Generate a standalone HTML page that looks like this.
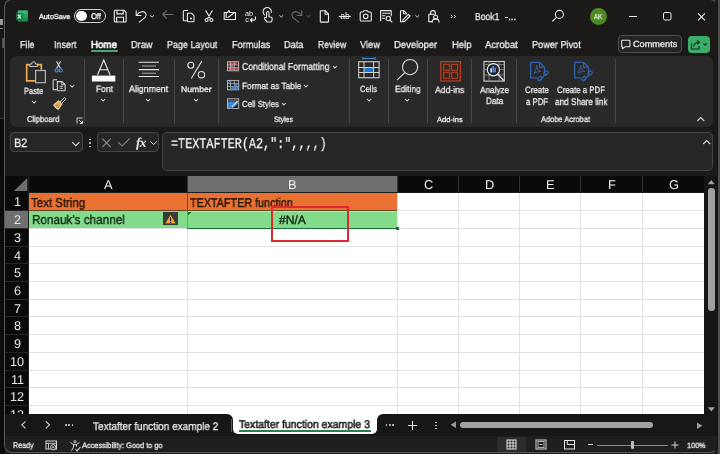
<!DOCTYPE html><html><head><meta charset="utf-8"><style>
*{margin:0;padding:0;box-sizing:border-box}
html,body{width:720px;height:454px;overflow:hidden;background:#101010;font-family:"Liberation Sans",sans-serif;color:#fff}
.a{position:absolute}
.t{position:absolute;white-space:nowrap;line-height:1;text-rendering:geometricPrecision;will-change:transform}
svg{position:absolute;overflow:visible}
</style></head><body>
<div class="a" style="left:0px;top:0px;width:720px;height:454px;background:#1c1c1c"></div>
<div class="a" style="left:0px;top:0px;width:5px;height:454px;background:#0c0c0c"></div>
<div class="a" style="left:0px;top:0px;width:4px;height:118px;background:#161616"></div>
<div class="a" style="left:0px;top:118px;width:4px;height:1px;background:#3a3a3a"></div>
<div class="a" style="left:0px;top:19px;width:3px;height:6px;background:#9a9a9a"></div>
<div class="a" style="left:0px;top:28px;width:3px;height:1px;background:#8a8a8a"></div>
<div class="a" style="left:2px;top:38px;width:2px;height:10px;background:#555"></div>
<div class="a" style="left:718px;top:0px;width:2px;height:454px;background:#4f4f4f"></div>
<div class="a" style="left:4px;top:-1px;width:714px;height:453.5px;background:#1b1a19;border:1px solid #5a5a5a;border-right-color:#141414;border-radius:8px"></div>
<svg style="left:0;top:0" width="720" height="454" viewBox="0 0 720 454"><rect x="17.7" y="10.4" width="10.2" height="11.2" rx="1" fill="#1d8f52"/><rect x="17.7" y="10.4" width="10.2" height="3.7" rx="1" fill="#33b877"/><rect x="22" y="14.1" width="5.9" height="3.7" fill="#21a366"/><rect x="16.2" y="13" width="6.6" height="7.1" rx="0.8" fill="#107c41"/><path d="M17.9 14.6l3.2 3.9M21.1 14.6l-3.2 3.9" stroke="#fff" stroke-width="1.1"/></svg>
<div class="t" style="left:38.90px;top:12.75px;font-size:7.25px;font-family:'Liberation Sans';color:#f0f0f0;transform:scaleX(0.989);transform-origin:0 0;-webkit-text-stroke:0.35px #f0f0f0;">AutoSave</div>
<div class="a" style="left:74px;top:8.8px;width:32px;height:14.6px;border:1.2px solid #d0d0d0;border-radius:8px"></div>
<div class="a" style="left:76.2px;top:11px;width:10.6px;height:10.3px;background:#fff;border-radius:50%"></div>
<div class="t" style="left:90.50px;top:12.75px;font-size:8.20px;font-family:'Liberation Sans';color:#f4f4f4;transform:scaleX(0.925);transform-origin:0 0;-webkit-text-stroke:0.4px #f4f4f4;">Off</div>
<svg style="left:0;top:0" width="720" height="454" viewBox="0 0 720 454"><path d="M114.3 11.2a1 1 0 0 1 1-1h8.6l2.2 2.2v8.6a1 1 0 0 1-1 1h-9.8a1 1 0 0 1-1-1z" stroke="#ececec" stroke-width="1.1" fill="none" stroke-linecap="round" stroke-linejoin="round"/><path d="M116.9 10.3v3.6h6.3v-3.6M116.6 21.8v-4.6h6.9v4.6" stroke="#ececec" stroke-width="1.1" fill="none" stroke-linecap="round" stroke-linejoin="round"/><path d="M136.2 10.8V15.5H141" stroke="#ececec" stroke-width="1.1" fill="none" stroke-linecap="round" stroke-linejoin="round"/><path d="M136.8 15C139.5 11.3 143.8 10.6 145.7 13.4C146.6 14.8 146.2 16.2 145.2 17.3L139.3 22.2" stroke="#ececec" stroke-width="1.1" fill="none" stroke-linecap="round" stroke-linejoin="round"/><path d="M150.2 15.3l1.9 1.8l1.9-1.8" stroke="#dcdcdc" stroke-width="1" fill="none"/><path d="M173 14.5H162.8M166.6 10.7L162.8 14.5L166.6 18.3" stroke="#6c6c6c" stroke-width="1.1" fill="none" stroke-linecap="round" stroke-linejoin="round"/><path d="M187.6 10.5h-3.3a1 1 0 0 0-1 1v8.2a1 1 0 0 0 1 1h2.5" stroke="#ececec" stroke-width="1.1" fill="none" stroke-linecap="round" stroke-linejoin="round"/><path d="M187.4 13.2h4.2l2.4 2.4v5.3a0.8 0.8 0 0 1-0.8 0.8h-5a0.8 0.8 0 0 1-0.8-0.8z" stroke="#ececec" stroke-width="1.1" fill="none" stroke-linecap="round" stroke-linejoin="round"/><path d="M190 18.5h2" stroke="#ececec" stroke-width="1.6"/><path d="M205.8 10.8L210.3 18.3M212.2 10.8L207.7 18.3" stroke="#ececec" stroke-width="1.1" fill="none" stroke-linecap="round" stroke-linejoin="round"/><circle cx="206.6" cy="20" r="1.5" stroke="#ececec" stroke-width="1.1" fill="none" stroke-linecap="round" stroke-linejoin="round"/><circle cx="211.4" cy="20" r="1.5" stroke="#ececec" stroke-width="1.1" fill="none" stroke-linecap="round" stroke-linejoin="round"/><path d="M224.2 12.5h3.5l0.8-1.8h1v1.8h6v7h-11.3z" stroke="#ececec" stroke-width="1.1" fill="none" stroke-linecap="round" stroke-linejoin="round"/><path d="M228 17.5l6-4.5M226.2 12.5v5" stroke="#ececec" stroke-width="1.1" fill="none" stroke-linecap="round" stroke-linejoin="round"/><text x="245" y="15.6" font-family="Liberation Sans" font-size="7.2" fill="#ececec">ab</text><text x="245.2" y="21.8" font-family="Liberation Sans" font-size="7.2" fill="#ececec">c</text><path d="M255.5 16.8v1.8a1.5 1.5 0 0 1-1.5 1.5h-3.5M252 18.3l-1.6 1.8l1.6 1.8" stroke="#ececec" stroke-width="1.1" fill="none" stroke-linecap="round" stroke-linejoin="round"/><path d="M266.6 17.5v-4.8a1.2 1.2 0 0 1 2.4 0v4l2.2 0.5a1.3 1.3 0 0 1 1 1.4l-0.4 2.6a1 1 0 0 1-1 0.8h-3.2a1 1 0 0 1-0.8-0.4l-2.2-2.8a0.9 0.9 0 0 1 1.3-1.2z" stroke="#ececec" stroke-width="1.1" fill="none" stroke-linecap="round" stroke-linejoin="round"/><path d="M264.4 14.8a4.2 4.2 0 1 1 7 -2.5" stroke="#ececec" stroke-width="1.1" fill="none" stroke-linecap="round" stroke-linejoin="round"/><path d="M279.4 15.3l1.9 1.8l1.9-1.8" stroke="#dcdcdc" stroke-width="1" fill="none"/><path d="M301.8 10.8V15.5H297" stroke="#6c6c6c" stroke-width="1.1" fill="none" stroke-linecap="round" stroke-linejoin="round"/><path d="M301.2 15C298.5 11.3 294.2 10.6 292.3 13.4C291.4 14.8 291.8 16.2 292.8 17.3L298.7 22.2" stroke="#6c6c6c" stroke-width="1.1" fill="none" stroke-linecap="round" stroke-linejoin="round"/><path d="M306.6 15.3l1.9 1.8l1.9-1.8" stroke="#6c6c6c" stroke-width="1" fill="none"/><path d="M320.3 10.8h5l3.2 3.2v7.5a0.6 0.6 0 0 1-0.6 0.6h-7a0.6 0.6 0 0 1-0.6-0.6z" stroke="#ececec" stroke-width="1.1" fill="none" stroke-linecap="round" stroke-linejoin="round"/><path d="M325.1 10.9v3.3h3.3" stroke="#ececec" stroke-width="1.1" fill="none" stroke-linecap="round" stroke-linejoin="round"/><text x="340.2" y="19.3" font-family="Liberation Sans" font-size="8.6" fill="#ececec">ab</text><path d="M338.8 16.5h12" stroke="#ececec" stroke-width="1.1"/><path d="M360.2 13a1 1 0 0 1 1-1h1.8l1-1.3h3.3l1 1.3h2a1 1 0 0 1 1 1v7a1 1 0 0 1-1 1h-9.1a1 1 0 0 1-1-1z" stroke="#ececec" stroke-width="1.1" fill="none" stroke-linecap="round" stroke-linejoin="round"/><circle cx="365.7" cy="16.3" r="2.3" stroke="#ececec" stroke-width="1.1" fill="none" stroke-linecap="round" stroke-linejoin="round"/><path d="M380.6 20.8v-10.2h10.6v5" stroke="#ececec" stroke-width="1.1" fill="none" stroke-linecap="round" stroke-linejoin="round"/><path d="M382.5 13.2h7.3M382.5 15.8h2.5M382.5 18.3h2" stroke="#ececec" stroke-width="1.1" fill="none" stroke-linecap="round" stroke-linejoin="round"/><circle cx="388.3" cy="18.5" r="2.2" stroke="#ececec" stroke-width="1.1" fill="none" stroke-linecap="round" stroke-linejoin="round"/><path d="M389.9 20.1l2 1.9" stroke="#ececec" stroke-width="1.1" fill="none" stroke-linecap="round" stroke-linejoin="round"/><path d="M406.5 13.5l-2.7-2.8h-3.3v11h3" stroke="#ececec" stroke-width="1.1" fill="none" stroke-linecap="round" stroke-linejoin="round"/><path d="M404.5 21.5l5.5-5.5l-1.6-1.6l-5.5 5.5v1.6z" stroke="#ececec" stroke-width="1.1" fill="none" stroke-linecap="round" stroke-linejoin="round"/><path d="M403.5 10.8v3h3" stroke="#ececec" stroke-width="1.1" fill="none" stroke-linecap="round" stroke-linejoin="round"/><path d="M415.4 15.3l1.9 1.8l1.9-1.8" stroke="#dcdcdc" stroke-width="1" fill="none"/><path d="M430.6 14.3v-1.3a2.4 2.4 0 0 1 4.8 0v1.3" stroke="#ececec" stroke-width="1.1" fill="none" stroke-linecap="round" stroke-linejoin="round"/><path d="M431.8 21.6h-3v-7.3h5.5" stroke="#ececec" stroke-width="1.1" fill="none" stroke-linecap="round" stroke-linejoin="round"/><circle cx="435.6" cy="17.2" r="2" stroke="#ececec" stroke-width="1.1" fill="none" stroke-linecap="round" stroke-linejoin="round"/><path d="M432.2 22.2a3.4 3.4 0 0 1 6.8 0" stroke="#ececec" stroke-width="1.1" fill="none" stroke-linecap="round" stroke-linejoin="round"/></svg>
<svg style="left:0;top:0" width="720" height="454" viewBox="0 0 720 454"><path d="M450.8 14.8l1.6 1.6l-1.6 1.6M453.9 14.8l1.6 1.6l-1.6 1.6" stroke="#e0e0e0" stroke-width="1" fill="none"/></svg>
<div class="t" style="left:474.50px;top:12.85px;font-size:10.05px;font-family:'Liberation Sans';color:#f0f0f0;transform:scaleX(0.851);transform-origin:0 0;-webkit-text-stroke:0.25px #f0f0f0;">Book1</div>
<div class="t" style="left:504.50px;top:12.85px;font-size:9.60px;font-family:'Liberation Sans';color:#f0f0f0;transform:scaleX(1.000);transform-origin:0 0;-webkit-text-stroke:0.25px #f0f0f0;">-...</div>
<svg style="left:0;top:0" width="720" height="454" viewBox="0 0 720 454"><circle cx="559.4" cy="14.4" r="4" stroke="#e6e6e6" stroke-width="1.1" fill="none"/><path d="M556.5 17.3L552.8 21" stroke="#e6e6e6" stroke-width="1.2" stroke-linecap="round"/></svg>
<div class="a" style="left:589.8px;top:8.2px;width:17px;height:17px;background:#4e8a1f;border-radius:50%"></div>
<div class="t" style="left:593.80px;top:13.35px;font-size:7.25px;font-family:'Liberation Sans';color:#f0f0f0;transform:scaleX(0.848);transform-origin:0 0;-webkit-text-stroke:0.25px #f0f0f0;">AK</div>
<div class="a" style="left:629px;top:15.5px;width:7.5px;height:1px;background:#e6e6e6"></div>
<svg style="left:0;top:0" width="720" height="454" viewBox="0 0 720 454"><rect x="663.5" y="12.5" width="7.5" height="7.5" rx="1.5" stroke="#e6e6e6" stroke-width="1" fill="none"/><path d="M698 13.3l7 7M705 13.3l-7 7" stroke="#eeeeee" stroke-width="1.05"/></svg>
<div class="t" style="left:20.30px;top:41.45px;font-size:10.15px;font-family:'Liberation Sans';color:#f2f2f2;transform:scaleX(0.881);transform-origin:0 0;-webkit-text-stroke:0.25px #f2f2f2;">File</div>
<div class="t" style="left:53.70px;top:41.45px;font-size:10.15px;font-family:'Liberation Sans';color:#f2f2f2;transform:scaleX(0.886);transform-origin:0 0;-webkit-text-stroke:0.25px #f2f2f2;">Insert</div>
<div class="t" style="left:130.70px;top:41.45px;font-size:10.15px;font-family:'Liberation Sans';color:#f2f2f2;transform:scaleX(0.907);transform-origin:0 0;-webkit-text-stroke:0.25px #f2f2f2;">Draw</div>
<div class="t" style="left:166.70px;top:41.45px;font-size:10.15px;font-family:'Liberation Sans';color:#f2f2f2;transform:scaleX(0.884);transform-origin:0 0;-webkit-text-stroke:0.25px #f2f2f2;">Page Layout</div>
<div class="t" style="left:232.20px;top:41.45px;font-size:10.15px;font-family:'Liberation Sans';color:#f2f2f2;transform:scaleX(0.903);transform-origin:0 0;-webkit-text-stroke:0.25px #f2f2f2;">Formulas</div>
<div class="t" style="left:284.40px;top:41.45px;font-size:10.15px;font-family:'Liberation Sans';color:#f2f2f2;transform:scaleX(0.905);transform-origin:0 0;-webkit-text-stroke:0.25px #f2f2f2;">Data</div>
<div class="t" style="left:317.50px;top:41.45px;font-size:10.15px;font-family:'Liberation Sans';color:#f2f2f2;transform:scaleX(0.850);transform-origin:0 0;-webkit-text-stroke:0.25px #f2f2f2;">Review</div>
<div class="t" style="left:360.00px;top:41.45px;font-size:10.15px;font-family:'Liberation Sans';color:#f2f2f2;transform:scaleX(0.920);transform-origin:0 0;-webkit-text-stroke:0.25px #f2f2f2;">View</div>
<div class="t" style="left:394.20px;top:41.45px;font-size:10.15px;font-family:'Liberation Sans';color:#f2f2f2;transform:scaleX(0.936);transform-origin:0 0;-webkit-text-stroke:0.25px #f2f2f2;">Developer</div>
<div class="t" style="left:451.60px;top:41.45px;font-size:10.15px;font-family:'Liberation Sans';color:#f2f2f2;transform:scaleX(0.934);transform-origin:0 0;-webkit-text-stroke:0.25px #f2f2f2;">Help</div>
<div class="t" style="left:484.90px;top:41.45px;font-size:10.15px;font-family:'Liberation Sans';color:#f2f2f2;transform:scaleX(0.941);transform-origin:0 0;-webkit-text-stroke:0.25px #f2f2f2;">Acrobat</div>
<div class="t" style="left:532.20px;top:41.45px;font-size:10.15px;font-family:'Liberation Sans';color:#f2f2f2;transform:scaleX(0.903);transform-origin:0 0;-webkit-text-stroke:0.25px #f2f2f2;">Power Pivot</div>
<div class="t" style="left:91.20px;top:41.45px;font-size:10.15px;font-family:'Liberation Sans';color:#fff;transform:scaleX(0.960);transform-origin:0 0;-webkit-text-stroke:0.6px #fff;">Home</div>
<div class="a" style="left:90.8px;top:50.3px;width:27.2px;height:2px;background:#4aa67a;border-radius:1px"></div>
<div class="a" style="left:617.6px;top:35.3px;width:64.2px;height:17.3px;border:1px solid #4e4e4e;border-radius:4px;background:#242424"></div>
<svg style="left:0;top:0" width="720" height="454" viewBox="0 0 720 454"><path d="M621.7 41a0.8 0.8 0 0 1 0.8-0.8h6.6a0.8 0.8 0 0 1 0.8 0.8v5a0.8 0.8 0 0 1-0.8 0.8h-4.3l-2.4 2v-2h-0.7z" stroke="#e6e6e6" stroke-width="1.05" fill="none" stroke-linejoin="round"/></svg>
<div class="t" style="left:632.90px;top:40.45px;font-size:8.85px;font-family:'Liberation Sans';color:#f0f0f0;transform:scaleX(1.035);transform-origin:0 0;-webkit-text-stroke:0.25px #f0f0f0;">Comments</div>
<div class="a" style="left:688px;top:35.8px;width:22px;height:16.8px;background:#3aae68;border-radius:4px"></div>
<svg style="left:0;top:0" width="720" height="454" viewBox="0 0 720 454"><path d="M691.5 43.5v5.5h7.5v-3" stroke="#0f2a17" stroke-width="1.1" fill="none"/><path d="M693.8 46.5c0.3-2.8 2.2-4.3 5-4.3M697.3 40.3l2 1.9l-2 1.9" stroke="#0f2a17" stroke-width="1.1" fill="none"/><path d="M703.3 43.3l1.8 1.7l1.8-1.7" stroke="#0f2a17" stroke-width="1.05" fill="none"/></svg>
<div class="a" style="left:10px;top:56px;width:703px;height:71px;background:#292929;border-radius:7px"></div>
<div class="a" style="left:84.2px;top:58.5px;width:1px;height:64px;background:#474747"></div>
<div class="a" style="left:123.0px;top:58.5px;width:1px;height:64px;background:#474747"></div>
<div class="a" style="left:174.25px;top:58.5px;width:1px;height:64px;background:#474747"></div>
<div class="a" style="left:217.6px;top:58.5px;width:1px;height:64px;background:#474747"></div>
<div class="a" style="left:349.0px;top:58.5px;width:1px;height:64px;background:#474747"></div>
<div class="a" style="left:388.2px;top:58.5px;width:1px;height:64px;background:#474747"></div>
<div class="a" style="left:426.5px;top:58.5px;width:1px;height:64px;background:#474747"></div>
<div class="a" style="left:471.1px;top:58.5px;width:1px;height:64px;background:#474747"></div>
<div class="a" style="left:515.7px;top:58.5px;width:1px;height:64px;background:#474747"></div>
<div class="a" style="left:614.5px;top:58.5px;width:1px;height:64px;background:#474747"></div>
<svg style="left:0;top:0" width="720" height="454" viewBox="0 0 720 454"><path d="M29.3 64.6h-2.6v16.2h8.2" stroke="#efae48" stroke-width="1.7" fill="none"/><path d="M38 64.6h3.3v5.2" stroke="#efae48" stroke-width="1.7" fill="none"/><path d="M29.6 66.4v-2.3h2a2 2.4 0 0 1 4 0h2v2.3z" stroke="#cfcfcf" stroke-width="1" fill="#2a2a2a" stroke-linejoin="round"/><rect x="35.6" y="70.5" width="9.8" height="12.2" stroke="#b4b4b4" stroke-width="1.2" fill="#2d2d2d"/></svg>
<div class="t" style="left:24.10px;top:87.15px;font-size:9.15px;font-family:'Liberation Sans';color:#f2f2f2;transform:scaleX(0.825);transform-origin:0 0;-webkit-text-stroke:0.25px #f2f2f2;">Paste</div>
<svg style="left:30.5px;top:100.45px" width="6.2" height="4.1" viewBox="0 0 6.2 4.1"><path d="M1 1L3.1 3.1L5.2 1" fill="none" stroke="#d8d8d8" stroke-width="1.05"/></svg>
<svg style="left:0;top:0" width="720" height="454" viewBox="0 0 720 454"><path d="M56.5 61.3L60.4 68.2M60.6 61.3L56.7 68.2" stroke="#e0e0e0" stroke-width="1.05" fill="none"/><circle cx="56.6" cy="70.4" r="1.6" stroke="#4e94da" stroke-width="1.1" fill="none"/><circle cx="60.6" cy="70.4" r="1.6" stroke="#4e94da" stroke-width="1.1" fill="none"/></svg>
<svg style="left:0;top:0" width="720" height="454" viewBox="0 0 720 454"><path d="M57 79.8h-3.2a0.7 0.7 0 0 0-0.7 0.7v8.4a0.7 0.7 0 0 0 0.7 0.7h3" stroke="#d6d6d6" stroke-width="1.05" fill="none"/><path d="M57.3 81.6h4.6l3.2 3.2v5.3a0.6 0.6 0 0 1-0.6 0.6h-6.6a0.6 0.6 0 0 1-0.6-0.6z" stroke="#d6d6d6" stroke-width="1.05" fill="#2a2a2a"/><path d="M61.8 81.8v3h3M59.5 86.3h3.5M59.5 88.3h3.5" stroke="#d6d6d6" stroke-width="0.9" fill="none"/></svg>
<svg style="left:69.2px;top:83.55px" width="6.2" height="4.1" viewBox="0 0 6.2 4.1"><path d="M1 1L3.1 3.1L5.2 1" fill="none" stroke="#d8d8d8" stroke-width="1.05"/></svg>
<svg style="left:0;top:0" width="720" height="454" viewBox="0 0 720 454"><path d="M60.2 101.8l3.8-3.8a0.9 0.9 0 0 1 1.3 0l0.2 0.2a0.9 0.9 0 0 1 0 1.3l-3.8 3.8" stroke="#d6d6d6" stroke-width="1" fill="none"/><path d="M53.6 104.8l5.2-4.2l3.3 3.3l-3.6 5.4c-1.5 0-3.8-1.8-4.9-4.5z" fill="#efae48" stroke="#e9e9e9" stroke-width="0.9" stroke-linejoin="round"/><path d="M56 106.3l2.5-2M57.5 107.8l2-1.7" stroke="#8a5a1a" stroke-width="0.7"/></svg>
<div class="t" style="left:26.90px;top:115.05px;font-size:8.60px;font-family:'Liberation Sans';color:#f2f2f2;transform:scaleX(0.880);transform-origin:0 0;-webkit-text-stroke:0.25px #f2f2f2;">Clipboard</div>
<svg style="left:75.5px;top:116.5px" width="8" height="8" viewBox="0 0 8 8"><path d="M1 6.5v-5.5h5.5" fill="none" stroke="#cfcfcf" stroke-width="1"/><path d="M3 3l3.5 3.5M6.5 3.8v2.7h-2.7" fill="none" stroke="#cfcfcf" stroke-width="1"/></svg>
<svg style="left:90px;top:58px" width="28" height="26" viewBox="0 0 28 26"><path d="M7.5 17L13.75 2L20 17M10 11.8h7.5" fill="none" stroke="#e6e6e6" stroke-width="1.1"/><rect x="1.9" y="17.6" width="23.4" height="5.9" fill="#fff"/></svg>
<div class="t" style="left:95.60px;top:84.75px;font-size:9.15px;font-family:'Liberation Sans';color:#f2f2f2;transform:scaleX(0.923);transform-origin:0 0;-webkit-text-stroke:0.25px #f2f2f2;">Font</div>
<svg style="left:100.4px;top:97.65px" width="6.2" height="4.1" viewBox="0 0 6.2 4.1"><path d="M1 1L3.1 3.1L5.2 1" fill="none" stroke="#d8d8d8" stroke-width="1.05"/></svg>
<svg style="left:137px;top:60px" width="24" height="20" viewBox="0 0 24 20"><path d="M1.75 2.25h20.25M1.75 9.6h20.25M1.75 16.5h20.25" stroke="#e6e6e6" stroke-width="1.1"/><path d="M4.9 6h14.1M4.9 13.25h14.1" stroke="#a8a8a8" stroke-width="1.1"/></svg>
<div class="t" style="left:129.00px;top:84.85px;font-size:9.30px;font-family:'Liberation Sans';color:#f2f2f2;transform:scaleX(0.945);transform-origin:0 0;-webkit-text-stroke:0.25px #f2f2f2;">Alignment</div>
<svg style="left:145.4px;top:97.65px" width="6.2" height="4.1" viewBox="0 0 6.2 4.1"><path d="M1 1L3.1 3.1L5.2 1" fill="none" stroke="#d8d8d8" stroke-width="1.05"/></svg>
<svg style="left:186px;top:59px" width="22" height="22" viewBox="0 0 22 22"><circle cx="4.8" cy="6.2" r="3" fill="none" stroke="#e6e6e6" stroke-width="1.1"/><circle cx="15.4" cy="15.7" r="3.2" fill="none" stroke="#e6e6e6" stroke-width="1.1"/><path d="M15.9 2L5.25 19.5" stroke="#e6e6e6" stroke-width="1.1"/></svg>
<div class="t" style="left:181.25px;top:85.75px;font-size:8.20px;font-family:'Liberation Sans';color:#f2f2f2;transform:scaleX(1.051);transform-origin:0 0;-webkit-text-stroke:0.25px #f2f2f2;">Number</div>
<svg style="left:193.15px;top:97.65px" width="6.2" height="4.1" viewBox="0 0 6.2 4.1"><path d="M1 1L3.1 3.1L5.2 1" fill="none" stroke="#d8d8d8" stroke-width="1.05"/></svg>
<svg style="left:0;top:0" width="720" height="454" viewBox="0 0 720 454"><rect x="228.6" y="62.3" width="8.5" height="2.6" fill="#e0403a"/><rect x="228.6" y="67.8" width="9.5" height="2.4" fill="#e0403a"/><rect x="230.8" y="65.2" width="2.6" height="2.4" fill="#3c86d8"/><rect x="228.4" y="65.2" width="2" height="2.4" fill="#b03434"/><rect x="227.5" y="61.7" width="11.2" height="9.1" stroke="#bdbdbd" stroke-width="0.9" fill="none"/><path d="M230.5 61.7v9.1M234.3 61.7v9.1M227.5 64.9h11.2M227.5 67.6h11.2" stroke="#bdbdbd" stroke-width="0.7"/><rect x="227.5" y="80.4" width="11.2" height="9.4" stroke="#bdbdbd" stroke-width="0.9" fill="none"/><path d="M230.5 80.4v9.4M234.3 80.4v9.4M227.5 83.4h11.2M227.5 86.5h11.2" stroke="#bdbdbd" stroke-width="0.7"/><path d="M230.2 89.2l6.2-6.2l1.6 1.6l-6.2 6.2z" fill="#3c86d8"/><rect x="234.8" y="86.8" width="3.6" height="2.8" fill="#3c86d8"/><path d="M228 83l2-2" stroke="#3c86d8" stroke-width="1"/><rect x="227.5" y="98.8" width="11.2" height="9.6" stroke="#bdbdbd" stroke-width="0.9" fill="none"/><path d="M228 101.6h10.2v2.2l-5.8 4.1h-4.4z" fill="#3c86d8"/><path d="M228 99.3h10.2v1.6h-10.2z" fill="#5a5a5a"/><path d="M231.2 107.6l6.4-6.4" stroke="#e8e8e8" stroke-width="1.1"/><path d="M230.6 108.6l1.4-1.8" stroke="#3c86d8" stroke-width="1.4"/></svg>
<div class="t" style="left:241.70px;top:63.15px;font-size:10.05px;font-family:'Liberation Sans';color:#f2f2f2;transform:scaleX(0.865);transform-origin:0 0;-webkit-text-stroke:0.25px #f2f2f2;">Conditional Formatting</div>
<svg style="left:332.1px;top:64.85px" width="5.8" height="3.9" viewBox="0 0 5.8 3.9"><path d="M1 1L2.9 2.9L4.8 1" fill="none" stroke="#d8d8d8" stroke-width="1.05"/></svg>
<div class="t" style="left:241.70px;top:81.55px;font-size:9.15px;font-family:'Liberation Sans';color:#f2f2f2;transform:scaleX(0.909);transform-origin:0 0;-webkit-text-stroke:0.25px #f2f2f2;">Format as Table</div>
<svg style="left:302.6px;top:83.64999999999999px" width="5.8" height="3.9" viewBox="0 0 5.8 3.9"><path d="M1 1L2.9 2.9L4.8 1" fill="none" stroke="#d8d8d8" stroke-width="1.05"/></svg>
<div class="t" style="left:241.70px;top:99.95px;font-size:8.85px;font-family:'Liberation Sans';color:#f2f2f2;transform:scaleX(0.885);transform-origin:0 0;-webkit-text-stroke:0.25px #f2f2f2;">Cell Styles</div>
<svg style="left:281.1px;top:102.05px" width="5.8" height="3.9" viewBox="0 0 5.8 3.9"><path d="M1 1L2.9 2.9L4.8 1" fill="none" stroke="#d8d8d8" stroke-width="1.05"/></svg>
<div class="t" style="left:274.20px;top:116.45px;font-size:7.85px;font-family:'Liberation Sans';color:#f2f2f2;transform:scaleX(0.884);transform-origin:0 0;-webkit-text-stroke:0.25px #f2f2f2;">Styles</div>
<svg style="left:357px;top:57px" width="24" height="23" viewBox="0 0 24 23"><path d="M6 1.5h12" stroke="#4a90d9" stroke-width="1"/><path d="M6 0v3M18 0v3" stroke="#4a90d9" stroke-width="0.8"/><rect x="7" y="10.9" width="9.6" height="4.5" fill="#1e73d2"/><rect x="1.7" y="4.75" width="20.4" height="16" fill="none" stroke="#d0d0d0" stroke-width="1.1"/><path d="M7 4.75v16M16.6 4.75v16M1.7 10.5h20.4M1.7 15.5h20.4" stroke="#d0d0d0" stroke-width="1"/></svg>
<div class="t" style="left:360.30px;top:84.55px;font-size:9.00px;font-family:'Liberation Sans';color:#f2f2f2;transform:scaleX(0.845);transform-origin:0 0;-webkit-text-stroke:0.25px #f2f2f2;">Cells</div>
<svg style="left:365.5px;top:97.65px" width="6.2" height="4.1" viewBox="0 0 6.2 4.1"><path d="M1 1L3.1 3.1L5.2 1" fill="none" stroke="#d8d8d8" stroke-width="1.05"/></svg>
<svg style="left:395px;top:57px" width="24" height="26" viewBox="0 0 24 26"><circle cx="15.1" cy="10.1" r="7.6" fill="none" stroke="#e0e0e0" stroke-width="1.1"/><path d="M9.8 15.6L2 23.2" stroke="#e0e0e0" stroke-width="1.1"/></svg>
<div class="t" style="left:394.50px;top:84.55px;font-size:9.00px;font-family:'Liberation Sans';color:#f2f2f2;transform:scaleX(0.934);transform-origin:0 0;-webkit-text-stroke:0.25px #f2f2f2;">Editing</div>
<svg style="left:404.09999999999997px;top:97.65px" width="6.2" height="4.1" viewBox="0 0 6.2 4.1"><path d="M1 1L3.1 3.1L5.2 1" fill="none" stroke="#d8d8d8" stroke-width="1.05"/></svg>
<svg style="left:439px;top:60px" width="23" height="23" viewBox="0 0 23 23"><rect x="1.8" y="1.6" width="19.6" height="19.4" fill="#3b2620" stroke="#b8421d" stroke-width="1.2"/><rect x="4.6" y="4.3" width="6" height="6" fill="none" stroke="#b8421d" stroke-width="1.05"/><rect x="12.6" y="4.3" width="6" height="6" fill="none" stroke="#b8421d" stroke-width="1.05"/><rect x="4.6" y="12.3" width="6" height="6" fill="none" stroke="#b8421d" stroke-width="1.05"/><rect x="12.6" y="12.3" width="6" height="6" fill="none" stroke="#b8421d" stroke-width="1.05"/></svg>
<div class="t" style="left:435.00px;top:86.15px;font-size:9.45px;font-family:'Liberation Sans';color:#f2f2f2;transform:scaleX(0.917);transform-origin:0 0;-webkit-text-stroke:0.25px #f2f2f2;">Add-ins</div>
<div class="t" style="left:436.60px;top:116.35px;font-size:7.40px;font-family:'Liberation Sans';color:#f2f2f2;transform:scaleX(1.024);transform-origin:0 0;-webkit-text-stroke:0.25px #f2f2f2;">Add-ins</div>
<svg style="left:482px;top:60px" width="24" height="23" viewBox="0 0 24 23"><rect x="2" y="1.5" width="20.3" height="19.6" fill="none" stroke="#cfcfcf" stroke-width="1.1"/><path d="M2 4.5h20.3M2 9.5h20.3M2 15h20.3M7 1.5v19.6M17 1.5v19.6" stroke="#8a8a8a" stroke-width="0.8"/><circle cx="11.4" cy="9.7" r="6.1" fill="#1b2230" stroke="#e8e8e8" stroke-width="1.15"/><path d="M15.8 14.2l5.8 6.3" stroke="#e8e8e8" stroke-width="1.2"/><rect x="8.4" y="8.2" width="1.5" height="4.3" fill="#f0f0f0"/><rect x="10.4" y="6" width="1.6" height="6.5" fill="#4a90d9"/><rect x="12.4" y="7.6" width="1.6" height="4.9" fill="#4a90d9"/></svg>
<div class="t" style="left:479.70px;top:86.15px;font-size:8.85px;font-family:'Liberation Sans';color:#f2f2f2;transform:scaleX(0.927);transform-origin:0 0;-webkit-text-stroke:0.25px #f2f2f2;">Analyze</div>
<div class="t" style="left:485.80px;top:97.35px;font-size:9.30px;font-family:'Liberation Sans';color:#f2f2f2;transform:scaleX(0.875);transform-origin:0 0;-webkit-text-stroke:0.25px #f2f2f2;">Data</div>
<svg style="left:528.5px;top:61px" width="22" height="23" viewBox="0 0 22 23"><path d="M1.6 1.3h9l4.9 4.9v6.5M1.6 1.3v15.5h6.5" fill="none" stroke="#3160ad" stroke-width="1.3"/><path d="M10.6 1.3v4.9h4.9" fill="none" stroke="#3160ad" stroke-width="1.2"/><path d="M5 12.5c1.5-2.5 2.5-5.5 2.8-8c0 2.5 1.5 5 4 6c-2.5 0-5.5 0.7-6.8 2z" fill="none" stroke="#3160ad" stroke-width="1"/><path d="M10.5 19.5l7-7" stroke="#3160ad" stroke-width="1.1"/><rect x="8.5" y="16" width="5" height="3.2" rx="1.6" transform="rotate(-45 11 17.6)" fill="none" stroke="#3160ad" stroke-width="1.2"/><rect x="14.5" y="10.5" width="5" height="3.2" rx="1.6" transform="rotate(-45 17 12.1)" fill="none" stroke="#3160ad" stroke-width="1.2"/></svg>
<svg style="left:573px;top:61px" width="22" height="23" viewBox="0 0 22 23"><path d="M1.6 1.3h9l4.9 4.9v6.5M1.6 1.3v15.5h6.5" fill="none" stroke="#3160ad" stroke-width="1.3"/><path d="M10.6 1.3v4.9h4.9" fill="none" stroke="#3160ad" stroke-width="1.2"/><path d="M5 12.5c1.5-2.5 2.5-5.5 2.8-8c0 2.5 1.5 5 4 6c-2.5 0-5.5 0.7-6.8 2z" fill="none" stroke="#3160ad" stroke-width="1"/><path d="M10.5 19.5l7-7" stroke="#3160ad" stroke-width="1.1"/><rect x="8.5" y="16" width="5" height="3.2" rx="1.6" transform="rotate(-45 11 17.6)" fill="none" stroke="#3160ad" stroke-width="1.2"/><rect x="14.5" y="10.5" width="5" height="3.2" rx="1.6" transform="rotate(-45 17 12.1)" fill="none" stroke="#3160ad" stroke-width="1.2"/></svg>
<div class="t" style="left:525.00px;top:86.45px;font-size:9.30px;font-family:'Liberation Sans';color:#f2f2f2;transform:scaleX(0.853);transform-origin:0 0;-webkit-text-stroke:0.25px #f2f2f2;">Create</div>
<div class="t" style="left:526.00px;top:97.65px;font-size:9.75px;font-family:'Liberation Sans';color:#f2f2f2;transform:scaleX(0.796);transform-origin:0 0;-webkit-text-stroke:0.25px #f2f2f2;">a PDF</div>
<div class="t" style="left:557.10px;top:86.45px;font-size:9.30px;font-family:'Liberation Sans';color:#f2f2f2;transform:scaleX(0.843);transform-origin:0 0;-webkit-text-stroke:0.25px #f2f2f2;">Create a PDF</div>
<div class="t" style="left:554.90px;top:97.65px;font-size:9.75px;font-family:'Liberation Sans';color:#f2f2f2;transform:scaleX(0.842);transform-origin:0 0;-webkit-text-stroke:0.25px #f2f2f2;">and Share link</div>
<div class="t" style="left:540.70px;top:116.35px;font-size:8.20px;font-family:'Liberation Sans';color:#f2f2f2;transform:scaleX(0.913);transform-origin:0 0;-webkit-text-stroke:0.25px #f2f2f2;">Adobe Acrobat</div>
<svg style="left:0;top:0" width="720" height="454" viewBox="0 0 720 454"><path d="M697.3 121l3.5-3.4l3.5 3.4" fill="none" stroke="#d6d6d6" stroke-width="1.05"/></svg>
<div class="a" style="left:9.9px;top:132px;width:73.3px;height:20.4px;background:#262626;border:1px solid #464646;border-radius:4px"></div>
<div class="t" style="left:14.30px;top:137.45px;font-size:12.15px;font-family:'Liberation Sans';color:#f2f2f2;transform:scaleX(0.902);transform-origin:0 0;-webkit-text-stroke:0.25px #f2f2f2;">B2</div>
<svg style="left:70.5px;top:140.5px" width="10" height="6" viewBox="0 0 10 6"><path d="M1.2 1.2l3.6 3.5l3.6-3.5" fill="none" stroke="#e0e0e0" stroke-width="1.1"/></svg>
<div class="a" style="left:89.3px;top:138.79999999999998px;width:1.6px;height:1.6px;background:#d0d0d0;border-radius:50%"></div>
<div class="a" style="left:89.3px;top:142.2px;width:1.6px;height:1.6px;background:#d0d0d0;border-radius:50%"></div>
<div class="a" style="left:89.3px;top:145.6px;width:1.6px;height:1.6px;background:#d0d0d0;border-radius:50%"></div>
<div class="a" style="left:97.2px;top:132px;width:61.6px;height:20.4px;background:#262626;border:1px solid #464646;border-radius:4px"></div>
<svg style="left:0;top:0" width="720" height="454" viewBox="0 0 720 454"><path d="M102.3 138.6l8.5 8.5M110.8 138.6l-8.5 8.5" stroke="#8f8f8f" stroke-width="1.05" fill="none"/><path d="M118.4 142.3l3.7 3.7l7.6-7.6" stroke="#8f8f8f" stroke-width="1.05" fill="none"/><path d="M150.3 141.3l3.3 3.3l3.3-3.3" stroke="#d6d6d6" stroke-width="1" fill="none"/></svg>
<div class="t" style="left:136px;top:136.2px;font-size:13.4px;font-family:'Liberation Serif';font-style:italic;font-weight:bold;color:#eeeeee;letter-spacing:-0.6px">fx</div>
<div class="a" style="left:161.7px;top:132px;width:551.3px;height:39.2px;background:#262626;border:1px solid #464646;border-radius:5px"></div>
<div class="t" style="left:170.90px;top:138.35px;font-size:14.70px;font-family:'Liberation Mono';color:#f4f4f4;transform:scaleX(0.803);transform-origin:0 0;-webkit-text-stroke:0.25px #f4f4f4;">=TEXTAFTER(A2,&quot;:&quot;,,,,)</div>
<svg style="left:0;top:0" width="720" height="454" viewBox="0 0 720 454"><path d="M703.2 144l3.5-3.4l3.5 3.4" fill="none" stroke="#d6d6d6" stroke-width="1.05"/></svg>
<div class="a" style="left:5px;top:176px;width:699px;height:238px;background:#fff"></div>
<div class="a" style="left:5px;top:176px;width:699px;height:16px;background:#0a0a0a"></div>
<div class="a" style="left:5px;top:192px;width:699px;height:1px;background:#1c1c1c"></div>
<div class="a" style="left:5px;top:176px;width:24px;height:238px;background:#0a0a0a"></div>
<div class="a" style="left:28px;top:176px;width:1px;height:238px;background:#1f1f1f"></div>
<svg style="left:5px;top:176px" width="24" height="16" viewBox="0 0 24 16"><polygon points="22.3,2 22.3,15 8.9,15" fill="#6e6e6e"/></svg>
<div class="a" style="left:188px;top:176px;width:209px;height:16px;background:#6f6f6f"></div>
<div class="a" style="left:5px;top:211px;width:23px;height:17px;background:#6f6f6f"></div>
<div class="a" style="left:29px;top:193px;width:368px;height:17px;background:#e97132"></div>
<div class="a" style="left:29px;top:211px;width:368px;height:17px;background:#83db8c"></div>
<div class="a" style="left:29px;top:210px;width:675px;height:1px;background:#e2e2e2"></div>
<div class="a" style="left:5px;top:210px;width:23px;height:1px;background:#262626"></div>
<div class="a" style="left:29px;top:228px;width:675px;height:1px;background:#e2e2e2"></div>
<div class="a" style="left:5px;top:228px;width:23px;height:1px;background:#262626"></div>
<div class="a" style="left:29px;top:246px;width:675px;height:1px;background:#e2e2e2"></div>
<div class="a" style="left:5px;top:246px;width:23px;height:1px;background:#262626"></div>
<div class="a" style="left:29px;top:263px;width:675px;height:1px;background:#e2e2e2"></div>
<div class="a" style="left:5px;top:263px;width:23px;height:1px;background:#262626"></div>
<div class="a" style="left:29px;top:281px;width:675px;height:1px;background:#e2e2e2"></div>
<div class="a" style="left:5px;top:281px;width:23px;height:1px;background:#262626"></div>
<div class="a" style="left:29px;top:299px;width:675px;height:1px;background:#e2e2e2"></div>
<div class="a" style="left:5px;top:299px;width:23px;height:1px;background:#262626"></div>
<div class="a" style="left:29px;top:316px;width:675px;height:1px;background:#e2e2e2"></div>
<div class="a" style="left:5px;top:316px;width:23px;height:1px;background:#262626"></div>
<div class="a" style="left:29px;top:334px;width:675px;height:1px;background:#e2e2e2"></div>
<div class="a" style="left:5px;top:334px;width:23px;height:1px;background:#262626"></div>
<div class="a" style="left:29px;top:352px;width:675px;height:1px;background:#e2e2e2"></div>
<div class="a" style="left:5px;top:352px;width:23px;height:1px;background:#262626"></div>
<div class="a" style="left:29px;top:370px;width:675px;height:1px;background:#e2e2e2"></div>
<div class="a" style="left:5px;top:370px;width:23px;height:1px;background:#262626"></div>
<div class="a" style="left:29px;top:387px;width:675px;height:1px;background:#e2e2e2"></div>
<div class="a" style="left:5px;top:387px;width:23px;height:1px;background:#262626"></div>
<div class="a" style="left:29px;top:405px;width:675px;height:1px;background:#e2e2e2"></div>
<div class="a" style="left:5px;top:405px;width:23px;height:1px;background:#262626"></div>
<div class="a" style="left:29px;top:423px;width:675px;height:1px;background:#e2e2e2"></div>
<div class="a" style="left:5px;top:423px;width:23px;height:1px;background:#262626"></div>
<div class="a" style="left:187px;top:193px;width:1px;height:221px;background:#e2e2e2"></div>
<div class="a" style="left:187px;top:176px;width:1px;height:16px;background:#333"></div>
<div class="a" style="left:397px;top:193px;width:1px;height:221px;background:#e2e2e2"></div>
<div class="a" style="left:397px;top:176px;width:1px;height:16px;background:#333"></div>
<div class="a" style="left:458px;top:193px;width:1px;height:221px;background:#e2e2e2"></div>
<div class="a" style="left:458px;top:176px;width:1px;height:16px;background:#333"></div>
<div class="a" style="left:519px;top:193px;width:1px;height:221px;background:#e2e2e2"></div>
<div class="a" style="left:519px;top:176px;width:1px;height:16px;background:#333"></div>
<div class="a" style="left:580px;top:193px;width:1px;height:221px;background:#e2e2e2"></div>
<div class="a" style="left:580px;top:176px;width:1px;height:16px;background:#333"></div>
<div class="a" style="left:642px;top:193px;width:1px;height:221px;background:#e2e2e2"></div>
<div class="a" style="left:642px;top:176px;width:1px;height:16px;background:#333"></div>
<div class="a" style="left:29px;top:210px;width:368px;height:1px;background:#6b4424"></div>
<div class="a" style="left:187px;top:193px;width:1px;height:17px;background:#8a4a22"></div>
<div class="a" style="left:187px;top:211px;width:1px;height:17px;background:#5aa86a"></div>
<div class="t" style="left:103.93px;top:178.65px;font-size:12.80px;font-family:'Liberation Sans';color:#eeeeee;transform:scaleX(1.000);transform-origin:0 0;">A</div>
<div class="t" style="left:288.43px;top:178.65px;font-size:12.80px;font-family:'Liberation Sans';color:#eeeeee;transform:scaleX(1.000);transform-origin:0 0;">B</div>
<div class="t" style="left:423.60px;top:178.65px;font-size:12.80px;font-family:'Liberation Sans';color:#eeeeee;transform:scaleX(1.000);transform-origin:0 0;">C</div>
<div class="t" style="left:484.60px;top:178.65px;font-size:12.80px;font-family:'Liberation Sans';color:#eeeeee;transform:scaleX(1.000);transform-origin:0 0;">D</div>
<div class="t" style="left:545.93px;top:178.65px;font-size:12.80px;font-family:'Liberation Sans';color:#eeeeee;transform:scaleX(1.000);transform-origin:0 0;">E</div>
<div class="t" style="left:607.77px;top:178.65px;font-size:12.80px;font-family:'Liberation Sans';color:#eeeeee;transform:scaleX(1.000);transform-origin:0 0;">F</div>
<div class="t" style="left:668.75px;top:178.65px;font-size:12.80px;font-family:'Liberation Sans';color:#eeeeee;transform:scaleX(1.000);transform-origin:0 0;">G</div>
<div class="t" style="left:13.70px;top:195.85px;font-size:12.65px;font-family:'Liberation Sans';color:#e8e8e8;transform:scaleX(1.000);transform-origin:0 0;">1</div>
<div class="t" style="left:13.70px;top:213.85px;font-size:12.65px;font-family:'Liberation Sans';color:#e8e8e8;transform:scaleX(1.000);transform-origin:0 0;">2</div>
<div class="t" style="left:13.70px;top:231.85px;font-size:12.65px;font-family:'Liberation Sans';color:#e8e8e8;transform:scaleX(1.000);transform-origin:0 0;">3</div>
<div class="t" style="left:13.70px;top:249.85px;font-size:12.65px;font-family:'Liberation Sans';color:#e8e8e8;transform:scaleX(1.000);transform-origin:0 0;">4</div>
<div class="t" style="left:13.70px;top:266.85px;font-size:12.65px;font-family:'Liberation Sans';color:#e8e8e8;transform:scaleX(1.000);transform-origin:0 0;">5</div>
<div class="t" style="left:13.70px;top:284.85px;font-size:12.65px;font-family:'Liberation Sans';color:#e8e8e8;transform:scaleX(1.000);transform-origin:0 0;">6</div>
<div class="t" style="left:13.70px;top:302.85px;font-size:12.65px;font-family:'Liberation Sans';color:#e8e8e8;transform:scaleX(1.000);transform-origin:0 0;">7</div>
<div class="t" style="left:13.70px;top:319.85px;font-size:12.65px;font-family:'Liberation Sans';color:#e8e8e8;transform:scaleX(1.000);transform-origin:0 0;">8</div>
<div class="t" style="left:13.70px;top:337.85px;font-size:12.65px;font-family:'Liberation Sans';color:#e8e8e8;transform:scaleX(1.000);transform-origin:0 0;">9</div>
<div class="t" style="left:10.19px;top:355.85px;font-size:12.65px;font-family:'Liberation Sans';color:#e8e8e8;transform:scaleX(1.000);transform-origin:0 0;">10</div>
<div class="t" style="left:10.66px;top:373.85px;font-size:12.65px;font-family:'Liberation Sans';color:#e8e8e8;transform:scaleX(1.000);transform-origin:0 0;">11</div>
<div class="t" style="left:10.19px;top:390.85px;font-size:12.65px;font-family:'Liberation Sans';color:#e8e8e8;transform:scaleX(1.000);transform-origin:0 0;">12</div>
<div class="t" style="left:10.19px;top:408.85px;font-size:12.65px;font-family:'Liberation Sans';color:#e8e8e8;transform:scaleX(1.000);transform-origin:0 0;">13</div>
<div class="t" style="left:31.20px;top:196.95px;font-size:12.95px;font-family:'Liberation Sans';color:#1c1208;transform:scaleX(0.886);transform-origin:0 0;-webkit-text-stroke:0.35px #1c1208">Text String</div>
<div class="t" style="left:190.20px;top:196.95px;font-size:12.65px;font-family:'Liberation Sans';color:#1c1208;transform:scaleX(0.853);transform-origin:0 0;-webkit-text-stroke:0.35px #1c1208">TEXTAFTER function</div>
<div class="t" style="left:31.70px;top:214.05px;font-size:12.95px;font-family:'Liberation Sans';color:#0f2412;transform:scaleX(0.906);transform-origin:0 0;-webkit-text-stroke:0.35px #0f2412">Ronauk&#x27;s channel</div>
<div class="t" style="left:279.00px;top:213.75px;font-size:12.05px;font-family:'Liberation Sans';color:#0f2412;transform:scaleX(1.004);transform-origin:0 0;-webkit-text-stroke:0.35px #0f2412">#N/A</div>
<div class="a" style="left:162.5px;top:211.5px;width:15px;height:13.5px;background:#3a3a3a"></div>
<svg style="left:162.5px;top:211.5px" width="15" height="14" viewBox="0 0 15 14"><polygon points="7.5,2.2 13.3,11.8 1.7,11.8" fill="#f3a43a" stroke="#222" stroke-width="0.6"/><rect x="6.9" y="5.3" width="1.2" height="3.8" fill="#222"/><rect x="6.9" y="9.9" width="1.2" height="1.2" fill="#222"/></svg>
<div class="a" style="left:187px;top:228px;width:211px;height:1px;background:#1d6b35"></div>
<div class="a" style="left:188px;top:211px;width:209px;height:1px;background:#a6efae"></div>
<div class="a" style="left:396px;top:227px;width:3px;height:3px;background:#1d6b35"></div>
<svg style="left:188px;top:212px" width="4" height="4" viewBox="0 0 4 4"><polygon points="0,0 3.5,0 0,3.5" fill="#0a6e1e"/></svg>
<div class="a" style="left:271px;top:206px;width:78px;height:36px;border:2px solid #dd2a30"></div>
<div class="a" style="left:704px;top:176px;width:13px;height:238px;background:#151515"></div>
<svg style="left:704px;top:176px" width="14" height="240" viewBox="0 0 14 240"><polygon points="7.3,4 10.8,8.3 3.8,8.3" fill="#a0a0a0"/><polygon points="7.3,235.5 10.8,231.2 3.8,231.2" fill="#a0a0a0"/></svg>
<div class="a" style="left:708px;top:188px;width:6.5px;height:123px;background:#a0a0a0;border-radius:3.25px"></div>
<div class="a" style="left:5px;top:413.7px;width:712px;height:22.6px;background:#171717"></div>
<div class="a" style="left:5px;top:436.3px;width:712px;height:15.2px;background:#1f1f1f;border-bottom-left-radius:6px;border-bottom-right-radius:6px"></div>
<div class="a" style="left:232.7px;top:413.7px;width:144px;height:20.3px;background:#fff;border-bottom-left-radius:5px;border-bottom-right-radius:5px"></div>
<svg style="left:226px;top:413.7px" width="8" height="6" viewBox="0 0 8 6"><path d="M0 0H7A0 0 0 0 1 7 0V6A6 6 0 0 0 1 0z" fill="#fff"/></svg>
<svg style="left:376.5px;top:413.7px" width="8" height="6" viewBox="0 0 8 6"><path d="M0 0V6A6 6 0 0 1 6 0z" fill="#fff"/></svg>
<svg style="left:20px;top:420px" width="8" height="10" viewBox="0 0 8 10"><path d="M5.5 1.3L1.8 4.8l3.7 3.5" fill="none" stroke="#cfcfcf" stroke-width="1.1"/></svg>
<svg style="left:43.5px;top:420px" width="8" height="10" viewBox="0 0 8 10"><path d="M1.8 1.3l3.7 3.5L1.8 8.3" fill="none" stroke="#cfcfcf" stroke-width="1.1"/></svg>
<div class="a" style="left:65.3px;top:424px;width:1.8px;height:1.8px;background:#d8d8d8;border-radius:50%"></div>
<div class="a" style="left:68.39999999999999px;top:424px;width:1.8px;height:1.8px;background:#d8d8d8;border-radius:50%"></div>
<div class="a" style="left:71.5px;top:424px;width:1.8px;height:1.8px;background:#d8d8d8;border-radius:50%"></div>
<div class="t" style="left:92.90px;top:421.65px;font-size:11.05px;font-family:'Liberation Sans';color:#f0f0f0;transform:scaleX(0.907);transform-origin:0 0;-webkit-text-stroke:0.25px #f0f0f0;">Textafter function example 2</div>
<div class="a" style="left:230.5px;top:418.5px;width:1px;height:13px;background:#5a5a5a"></div>
<div class="t" style="left:239.30px;top:419.65px;font-size:11.20px;font-family:'Liberation Sans';color:#202020;transform:scaleX(0.936);transform-origin:0 0;-webkit-text-stroke:0.55px #202020;">Textafter function example 3</div>
<div class="a" style="left:238.9px;top:430.4px;width:132.2px;height:1.9px;background:#2f7d4f"></div>
<div class="a" style="left:385.6px;top:424px;width:1.8px;height:1.8px;background:#d8d8d8;border-radius:50%"></div>
<div class="a" style="left:388.85px;top:424px;width:1.8px;height:1.8px;background:#d8d8d8;border-radius:50%"></div>
<div class="a" style="left:392.1px;top:424px;width:1.8px;height:1.8px;background:#d8d8d8;border-radius:50%"></div>
<svg style="left:407px;top:419.5px" width="11" height="11" viewBox="0 0 11 11"><path d="M5.5 1v9M1 5.5h9" stroke="#e0e0e0" stroke-width="1.1"/></svg>
<div class="a" style="left:435px;top:421.6px;width:1.8px;height:1.8px;background:#d8d8d8;border-radius:50%"></div>
<div class="a" style="left:435px;top:424.6px;width:1.8px;height:1.8px;background:#d8d8d8;border-radius:50%"></div>
<div class="a" style="left:435px;top:427.6px;width:1.8px;height:1.8px;background:#d8d8d8;border-radius:50%"></div>
<svg style="left:450px;top:421px" width="7" height="8" viewBox="0 0 7 8"><polygon points="6,0.5 6,7 0.6,3.75" fill="#9a9a9a"/></svg>
<div class="a" style="left:459.7px;top:421.6px;width:193.3px;height:6.6px;background:#a2a2a2;border-radius:3.3px"></div>
<svg style="left:696px;top:421.5px" width="7" height="8" viewBox="0 0 7 8"><polygon points="1,0.5 1,7 6.4,3.75" fill="#9a9a9a"/></svg>
<div class="t" style="left:13.00px;top:442.05px;font-size:8.20px;font-family:'Liberation Sans';color:#f0f0f0;transform:scaleX(0.873);transform-origin:0 0;-webkit-text-stroke:0.25px #f0f0f0;">Ready</div>
<svg style="left:45px;top:439.5px" width="13" height="11" viewBox="0 0 13 11"><rect x="1" y="1" width="10.5" height="8" fill="none" stroke="#d8d8d8" stroke-width="1"/><path d="M1 3.3h10.5M3.5 3.3v5.7" stroke="#d8d8d8" stroke-width="0.9"/><circle cx="8.2" cy="7.2" r="2.6" fill="#1f1f1f" stroke="#d8d8d8" stroke-width="1"/><circle cx="8.2" cy="7.2" r="1" fill="#d8d8d8"/></svg>
<svg style="left:68.5px;top:439.5px" width="13" height="12" viewBox="0 0 13 12"><circle cx="6" cy="1.8" r="1.2" fill="none" stroke="#d8d8d8" stroke-width="0.9"/><path d="M1.5 2.5l3 2.2h3l3-2.2M4.5 4.7v2.5l-2 3.5M7.5 4.7v2" fill="none" stroke="#d8d8d8" stroke-width="1"/><path d="M6.5 9l1.5 1.8l3.5-4" fill="none" stroke="#d8d8d8" stroke-width="1.1"/></svg>
<div class="t" style="left:82.20px;top:441.95px;font-size:7.85px;font-family:'Liberation Sans';color:#f0f0f0;transform:scaleX(0.937);transform-origin:0 0;-webkit-text-stroke:0.25px #f0f0f0;">Accessibility: Good to go</div>
<div class="a" style="left:496.9px;top:436.75px;width:29px;height:14.85px;background:#2c2c2c"></div>
<svg style="left:506px;top:439px" width="11" height="11" viewBox="0 0 11 11"><rect x="1" y="1" width="9" height="9" fill="none" stroke="#e6e6e6" stroke-width="1"/><path d="M4 1v9M7 1v9M1 4h9M1 7h9" stroke="#e6e6e6" stroke-width="0.9"/></svg>
<svg style="left:534.5px;top:439px" width="12" height="11" viewBox="0 0 12 11"><rect x="1" y="1" width="10" height="9" fill="none" stroke="#d8d8d8" stroke-width="1"/><rect x="3" y="2.5" width="6" height="6" fill="none" stroke="#bcbcbc" stroke-width="0.9"/><path d="M4.5 5.5h3" stroke="#d8d8d8" stroke-width="0.9"/></svg>
<svg style="left:0;top:0" width="720" height="454" viewBox="0 0 720 454"><rect x="564.5" y="440.5" width="10" height="8.5" stroke="#e6e6e6" stroke-width="1" fill="none"/><path d="M567.3 440.5v4h7.2" stroke="#e6e6e6" stroke-width="1" fill="none"/></svg>
<div class="a" style="left:587.8px;top:444.2px;width:4.9px;height:1px;background:#d0d0d0"></div>
<div class="a" style="left:597px;top:444.5px;width:71px;height:1.2px;background:#8a8a8a"></div>
<div class="a" style="left:630.8px;top:440.7px;width:3.4px;height:8px;background:#bdbdbd;border-radius:1px"></div>
<svg style="left:671px;top:441px" width="8" height="8" viewBox="0 0 8 8"><path d="M4 0.5v7M0.5 4h7" stroke="#d8d8d8" stroke-width="1"/></svg>
<div class="t" style="left:686.70px;top:441.75px;font-size:7.55px;font-family:'Liberation Sans';color:#f0f0f0;transform:scaleX(0.963);transform-origin:0 0;-webkit-text-stroke:0.25px #f0f0f0;">100%</div>
</body></html>
